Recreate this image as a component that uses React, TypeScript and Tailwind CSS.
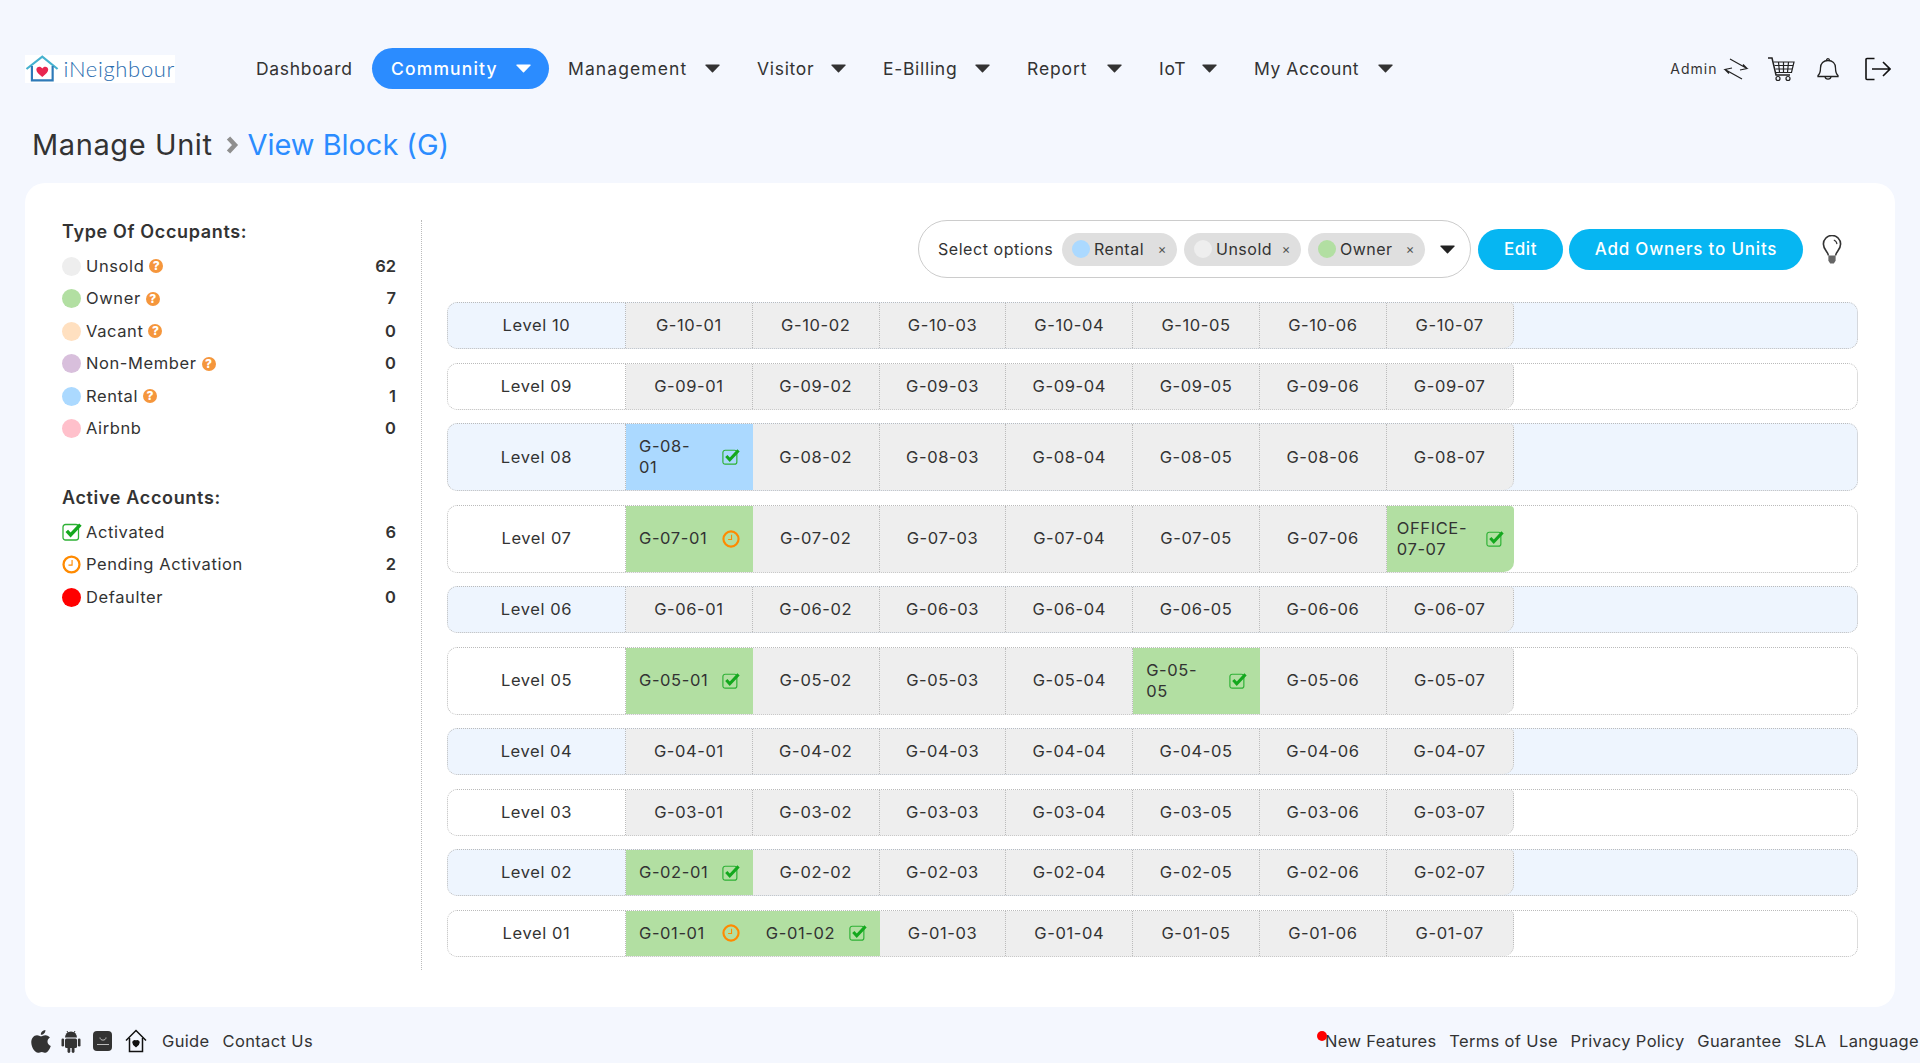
const navItems = [
  { label: "Dashboard", w: "w-[98px]" },
  { label: "Community", w: "w-[107px]", active: true, arrow: true, track: "tracking-[1.15px]" },
  { label: "Management", w: "w-[119px]", arrow: true, track: "tracking-[1.1px]" },
  { label: "Visitor", w: "w-[56px]", arrow: true },
  { label: "E-Billing", w: "w-[74px]", arrow: true },
  { label: "Report", w: "w-[62px]", arrow: true, track: "tracking-[0.9px]" },
  { label: "IoT", w: "w-[25px]", arrow: true },
  { label: "My Account", w: "w-[106px]", arrow: true, track: "tracking-[0.55px]" },
];

const occupants = [
  { label: "Unsold", color: "bg-[#eeeeee]", count: 62, help: true },
  { label: "Owner", color: "bg-[#b2dfa2]", count: 7, help: true },
  { label: "Vacant", color: "bg-[#ffe0c0]", count: 0, help: true },
  { label: "Non-Member", color: "bg-[#d8bfdc]", count: 0, help: true },
  { label: "Rental", color: "bg-[#abd9ff]", count: 1, help: true },
  { label: "Airbnb", color: "bg-[#ffc0cb]", count: 0 },
];

// units that are not plain "unsold" cells
type Special = { bg: string; icon: "check" | "clock"; lines?: string[]; pad?: string };
const special: Record<string, Special> = {
  "G-08-01": { bg: "bg-[#abd9ff]", icon: "check", lines: ["G-08-", "01"] },
  "G-07-01": { bg: "bg-[#b2dfa2]", icon: "clock" },
  "G-07-07": { bg: "bg-[#b2dfa2]", icon: "check", lines: ["OFFICE-", "07-07"], pad: "px-[10px]" },
  "G-05-01": { bg: "bg-[#b2dfa2]", icon: "check" },
  "G-05-05": { bg: "bg-[#b2dfa2]", icon: "check", lines: ["G-05-", "05"] },
  "G-02-01": { bg: "bg-[#b2dfa2]", icon: "check" },
  "G-01-01": { bg: "bg-[#b2dfa2]", icon: "clock" },
  "G-01-02": { bg: "bg-[#b2dfa2]", icon: "check" },
};

const levels = ["10", "09", "08", "07", "06", "05", "04", "03", "02", "01"];
const units = ["01", "02", "03", "04", "05", "06", "07"];

function CheckIcon({ size = 18 }: { size?: number }) {
  return (
    <svg width={size} height={size} viewBox="0 0 20 20" fill="none">
      <rect x="1" y="2.5" width="15.5" height="15.5" rx="2.5" stroke="#2eb135" strokeWidth="1.3" />
      <path d="M4.8 8.8 8.6 13 18.4 2.6" stroke="#14a81e" strokeWidth="3.4" />
    </svg>
  );
}

function ClockIcon({ size = 18 }: { size?: number }) {
  return (
    <svg width={size} height={size} viewBox="0 0 20 20" fill="none">
      <circle cx="10" cy="10" r="8.4" stroke="#ff8a00" strokeWidth="2.4" />
      <path d="M10.6 5.2v5.4H6.8" stroke="#ff8a00" strokeWidth="1.2" />
    </svg>
  );
}

function HelpIcon() {
  return (
    <span className="ml-[5px] flex h-[14px] w-[14px] items-center justify-center rounded-full bg-[#f5963c] text-[12px] font-extrabold leading-none tracking-normal text-white">
      ?
    </span>
  );
}

function Caret({ className }: { className: string }) {
  return (
    <svg width="15" height="9" viewBox="0 0 15 9" className={className}>
      <path d="M1 .5h13a.7.7 0 0 1 .5 1.1L8 8.3a.7.7 0 0 1-1 0L.5 1.6A.7.7 0 0 1 1 .5Z" fill="currentColor" />
    </svg>
  );
}

function Logo() {
  return (
    <div className="flex h-[28px] w-[150px] items-center bg-white">
      <svg width="36" height="28" viewBox="0 0 36 28" fill="none">
        <path d="M1.5 14 17.500 1.500 33 14" stroke="#45b1cf" strokeWidth="2.2" />
        <path d="M7 11v14.500h21V11" stroke="#2e7ab8" strokeWidth="2.2" />
        <path d="M17.500 22c-4-2.800-6-5-6-7.400 0-3.200 4.200-4 6-1.200 1.800-2.800 6-2 6 1.200 0 2.400-2 4.600-6 7.400Z" fill="#e8264f" />
      </svg>
      <span className="ml-[3px] font-['Lato',sans-serif] text-[22px] font-light leading-none tracking-[0.65px] text-[#2a6db0]">
        iNeighbour
      </span>
    </div>
  );
}

function UnitCell({ code, last }: { code: string; last: boolean }) {
  const s = special[code];
  const corner = last ? "rounded-br-[10px] rounded-tr-[4px]" : "";
  if (!s) {
    return (
      <div className={`flex w-[126.8px] shrink-0 items-center justify-center border-r border-dotted border-[#bbbbbb] bg-[#eeeeee] py-[12px] ${corner}`}>
        {code}
      </div>
    );
  }
  return (
    <div className={`flex w-[126.8px] shrink-0 items-center justify-between py-[12px] ${s.pad ?? "px-[13px]"} ${s.bg} ${corner}`}>
      <span className="whitespace-nowrap">
        {s.lines ? (
          <>
            {s.lines[0]}
            <br />
            {s.lines[1]}
          </>
        ) : (
          code
        )}
      </span>
      {s.icon === "check" ? <CheckIcon /> : <ClockIcon />}
    </div>
  );
}

function Chip({ label, color, w }: { label: string; color: string; w: string }) {
  return (
    <div className={`flex h-[33px] items-center rounded-full bg-[#dfdfdf] pl-[10px] pr-[10px] ${w}`}>
      <span className={`h-[18px] w-[18px] shrink-0 rounded-full ${color}`} />
      <span className="ml-[4px] flex-1 tracking-[0.5px]">{label}</span>
      <span className="text-[13px] leading-none text-[#555555]">×</span>
    </div>
  );
}

export default function App() {
  return (
    <div className="flex h-[1063px] w-[1920px] flex-col overflow-hidden bg-[#f4f7fe] pt-[48px] font-['Inter',sans-serif] text-[16.5px] leading-[21px] tracking-[0.6px] text-[#333333]">
      {/* top bar */}
      <header className="flex h-[41px] items-center pl-[25px] pr-[29px]">
        <Logo />
        <nav className="ml-[62px] flex items-center text-[17.5px] tracking-[0.7px]">
          {navItems.map((item) => (
            <div
              key={item.label}
              className={`flex h-[41px] items-center pl-[19px] pr-[18px] ${item.active ? "rounded-full bg-[#2b8cff] text-white" : ""}`}
            >
              <span className={`whitespace-nowrap ${item.w} ${item.track ?? ""} ${item.active ? "font-medium" : ""}`}>{item.label}</span>
              {item.arrow && <Caret className={`ml-[18px] ${item.active ? "text-white" : "text-[#333333]"}`} />}
            </div>
          ))}
        </nav>
        <div className="ml-auto flex items-center">
          <span className="text-[14px] tracking-[1px]">Admin</span>
          <svg width="26" height="24" viewBox="0 0 26 24" fill="none" stroke="#222222" strokeWidth="1.2" className="ml-[5px]">
            <path d="M7 2 24 11.500 17 13M20 7.500l4 4M19 22 2 12.500l7-1.500M6 16.500l-4-4" />
          </svg>
          <svg width="28" height="26" viewBox="0 0 28 26" fill="none" stroke="#222222" strokeWidth="1.2" className="ml-[18.5px]">
            <path d="M1 2h4l4 17h14" strokeWidth="1.5" />
            <path d="M6.500 6H27l-2.500 10.500H9" />
            <path d="M7.500 9.500h18.500M8.500 13h16.500M11.500 6l1 10.500M16.500 6v10.500M21.500 6l-1 10.500" />
            <circle cx="11" cy="22.500" r="2" />
            <circle cx="21" cy="22.500" r="2" />
          </svg>
          <svg width="22" height="26" viewBox="0 0 22 26" fill="none" stroke="#222222" strokeWidth="1.3" className="ml-[22px]">
            <path d="M1 19.500c2.200-1.800 2.500-3.600 2.500-7.500 0-4.500 3-7.500 7.500-7.500s7.500 3 7.500 7.500c0 3.900.3 5.700 2.500 7.500v1H1v-1Z" />
            <path d="M9.500 4.500c0-2.500 3-2.500 3 0M8 20.500c.4 3.500 5.600 3.500 6 0" />
          </svg>
          <svg width="26" height="24" viewBox="0 0 26 24" fill="none" stroke="#111111" strokeWidth="1.6" className="ml-[26px]">
            <path d="M9.500 1.500H2a1 1 0 0 0-1 1v19a1 1 0 0 0 1 1h7.500" />
            <path d="M7 12h18M18 5l7 7-7 7" />
          </svg>
        </div>
      </header>

      {/* breadcrumb */}
      <div className="mt-[39px] flex h-[34px] items-center pl-[32px] text-[29px] leading-[34px]">
        <span className="whitespace-nowrap tracking-[0.6px]">Manage Unit</span>
        <svg width="13" height="18" viewBox="0 0 13 18" className="ml-[13px]" fill="none" stroke="#8f8f8f" strokeWidth="4.5">
          <path d="M2.500 2l6.500 7-6.500 7" />
        </svg>
        <span className="ml-[9px] whitespace-nowrap tracking-[-0.05px] text-[#2b8cff]">View Block (G)</span>
      </div>

      {/* main card */}
      <main className="mx-[25px] mt-[21px] flex h-[824px] shrink-0 rounded-[20px] bg-white py-[37px] pl-[37px] pr-[37px]">
        <aside className="w-[360px] shrink-0 border-r border-dotted border-[#bbbbbb] pr-[25px]">
          <h3 className="text-[18px] font-semibold leading-[24px] tracking-[0.65px]">Type Of Occupants:</h3>
          <div className="mt-[6px]">
            {occupants.map((o) => (
              <div key={o.label} className="flex h-[32.5px] items-center">
                <span className={`h-[19px] w-[19px] rounded-full ${o.color}`} />
                <span className="ml-[5px]">{o.label}</span>
                {o.help && <HelpIcon />}
                <span className="ml-auto font-semibold tracking-normal">{o.count}</span>
              </div>
            ))}
          </div>
          <h3 className="mt-[41px] text-[18px] font-semibold leading-[24px] tracking-[0.65px]">Active Accounts:</h3>
          <div className="mt-[6px]">
            <div className="flex h-[32.5px] items-center">
              <CheckIcon size={20} />
              <span className="ml-[4px]">Activated</span>
              <span className="ml-auto font-semibold tracking-normal">6</span>
            </div>
            <div className="flex h-[32.5px] items-center">
              <ClockIcon size={19} />
              <span className="ml-[5px]">Pending Activation</span>
              <span className="ml-auto font-semibold tracking-normal">2</span>
            </div>
            <div className="flex h-[32.5px] items-center">
              <span className="h-[19px] w-[19px] rounded-full bg-[#ff0000]" />
              <span className="ml-[5px]">Defaulter</span>
              <span className="ml-auto font-semibold tracking-normal">0</span>
            </div>
          </div>
        </aside>

        <section className="ml-[25px] flex-1">
          <div className="flex h-[58px] items-center justify-end pr-[15px] text-[16px]">
            <div className="flex h-[58px] w-[553px] items-center rounded-full border border-[#cccccc] pl-[19px]">
              <span className="w-[124px] whitespace-nowrap tracking-[0.55px]">Select options</span>
              <div className="flex gap-[7px]">
                <Chip label="Rental" color="bg-[#abd9ff]" w="w-[115px]" />
                <Chip label="Unsold" color="bg-[#eeeeee]" w="w-[117px]" />
                <Chip label="Owner" color="bg-[#b2dfa2]" w="w-[117px]" />
              </div>
              <Caret className="ml-[15px] text-[#222222]" />
            </div>
            <button className="ml-[7px] h-[41px] w-[85px] rounded-full bg-[#06b6f2] text-[17px] font-medium text-white">Edit</button>
            <button className="ml-[6px] h-[41px] w-[234px] rounded-full bg-[#06b6f2] text-[17px] font-medium tracking-[0.8px] text-white">Add Owners to Units</button>
            <svg width="22" height="29" viewBox="0 0 22 32" fill="none" className="ml-[18px]">
              <path d="M7 22.500c0-4-5.500-6-5.500-12.500a9.500 9.500 0 0 1 19 0c0 6.500-5.500 8.500-5.500 12.500" stroke="#333333" strokeWidth="1.800" />
              <path d="M13 5.500a5.500 5.500 0 0 1 3.500 4.500" stroke="#333333" strokeWidth="1.200" />
              <path d="M7 22.500h8v6l-2 3H9l-2-3z" fill="#666666" />
            </svg>
          </div>

          <div className="mt-[24px] flex flex-col gap-[13.55px]">
            {levels.map((lv, i) => (
              <div
                key={lv}
                className={`flex overflow-hidden rounded-[10px] border border-dotted border-[#bbbbbb] ${i % 2 === 0 ? "bg-[#eef5fe]" : "bg-white"}`}
              >
                <div className="flex w-[178px] shrink-0 items-center justify-center border-r border-dotted border-[#bbbbbb] py-[12px]">
                  Level {lv}
                </div>
                {units.map((u, j) => {
                  const code = `G-${lv}-${u}`;
                  return <UnitCell key={u} code={code} last={j === units.length - 1} />;
                })}
              </div>
            ))}
          </div>
        </section>
      </main>

      {/* footer */}
      <footer className="flex h-[56px] items-center pl-[31px] pr-[1px] pt-[12px] text-[16.5px] tracking-[0.35px]">
        <svg width="20" height="23" viewBox="0 0 20 23" fill="#333333">
          <path d="M14.400 0c.2 2.600-2 4.900-4.600 4.800C9.500 2.400 11.900.2 14.400 0Z" />
          <path d="M10 6.300c1.100 0 2.600-1.200 4.500-1.100 1.900.1 3.500 1 4.400 2.400-3.600 2.200-3 7 .9 8.500-.9 2.600-3 6.700-5.300 6.700-1.300 0-2.100-.9-3.700-.9-1.600 0-2.500.9-3.700.9C3.800 22.800.5 17.300.3 12.800.1 8.300 2.700 5.300 6 5.200c1.600 0 3 1.100 4 1.100Z" />
        </svg>
        <svg width="20" height="23" viewBox="0 0 20 23" fill="#333333" className="ml-[10px]">
          <path d="M4 7.500a6 6 0 0 1 12 0H4Z" />
          <path d="M6 1l1.500 2.500M14 1l-1.500 2.500" stroke="#333333" strokeWidth="1" />
          <rect x="4" y="8.500" width="12" height="9.500" rx="1.500" />
          <rect x=".5" y="8.500" width="2.600" height="8" rx="1.300" />
          <rect x="16.900" y="8.500" width="2.600" height="8" rx="1.300" />
          <rect x="6.500" y="17" width="2.800" height="6" rx="1.400" />
          <rect x="10.700" y="17" width="2.800" height="6" rx="1.400" />
        </svg>
        <div className="ml-[12px] flex h-[20px] w-[19px] flex-col items-center justify-center gap-[3px] rounded-[4px] bg-[#333333]">
          <svg width="8" height="4" viewBox="0 0 8 4" fill="none" stroke="#dddddd" strokeWidth="0.8">
            <path d="M1 .5c0 3.500 6 3.500 6 0" />
          </svg>
          <span className="h-[1px] w-[12px] bg-[#bbbbbb]" />
        </div>
        <svg width="22" height="24" viewBox="0 0 22 24" fill="none" stroke="#111111" strokeWidth="1.500" className="ml-[13px]">
          <path d="M1 11.500 11 1.500l10 10" />
          <path d="M4.500 9v13.500h13V9" />
          <path d="M11 17.500c-2-1.500-3-2.600-3-4 0-1.800 2.200-2.200 3-.8.800-1.400 3-1 3 .8 0 1.400-1 2.500-3 4Z" fill="#111111" />
        </svg>
        <span className="ml-[15px]">Guide</span>
        <span className="ml-[13px]">Contact Us</span>
        <div className="relative ml-auto flex gap-[12.6px]">
          <span className="absolute left-[-8px] top-0 h-[10px] w-[10px] rounded-full bg-[#ff0000]" />
          <span>New Features</span>
          <span>Terms of Use</span>
          <span>Privacy Policy</span>
          <span>Guarantee</span>
          <span>SLA</span>
          <span>Language</span>
        </div>
      </footer>
    </div>
  );
}
